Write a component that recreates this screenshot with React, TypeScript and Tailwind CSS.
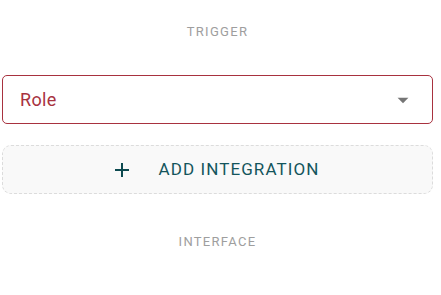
import React from 'react';

function SectionLabel({ children }: { children: React.ReactNode }) {
  return (
    <div className="text-center text-[13px] leading-4 tracking-[1.3px] text-[#9e9e9e] uppercase">
      {children}
    </div>
  );
}

export default function App() {
  return (
    <div className="w-[441px] h-[295px] bg-white pl-[2px] font-['Roboto',sans-serif] overflow-hidden">
      <div className="w-[431px] flex flex-col">
        <div className="pt-[24px]">
          <SectionLabel>Trigger</SectionLabel>
        </div>

        <div className="mt-[35px] h-[49px] rounded-[5px] border border-[#a8323f] flex items-center justify-between pl-[17px] pr-[16px]">
          <span className="text-[18px] tracking-[0.3px] text-[#a8323f]">Role</span>
          <svg viewBox="0 0 24 24" className="w-[26px] h-[26px] fill-[#757575]">
            <path d="M7 10l5 5 5-5z" />
          </svg>
        </div>

        <button
          type="button"
          className="mt-[21px] h-[49px] rounded-[9px] border border-dashed border-[#dcdcdc] bg-[#f9f9f9] flex items-center justify-center gap-[24px] pr-[5px]"
        >
          <svg viewBox="0 0 24 24" className="w-[24px] h-[24px] fill-[#0d4a50]">
            <path d="M19 13h-6v6h-2v-6H5v-2h6V5h2v6h6v2z" />
          </svg>
          <span className="text-[17px] tracking-[1.1px] text-[#14555c] uppercase">Add integration</span>
        </button>

        <div className="mt-[40px]">
          <SectionLabel>Interface</SectionLabel>
        </div>
      </div>
    </div>
  );
}
